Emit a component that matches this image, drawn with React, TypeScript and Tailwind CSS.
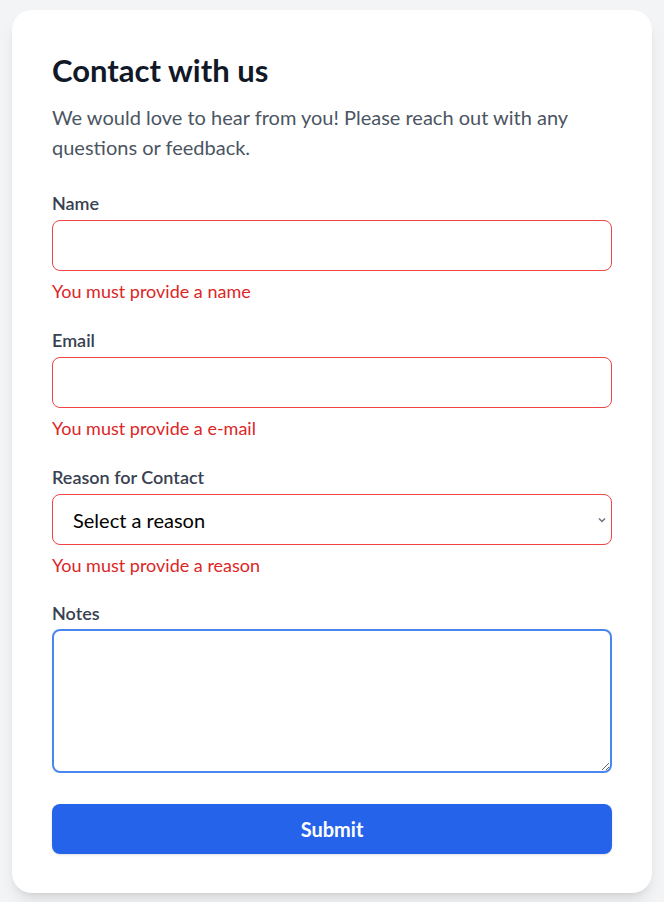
import { useState } from "react";

const fieldClass =
  "block w-full h-[51px] rounded-lg border border-[#ef4444] bg-white px-4 text-[18px] text-black outline-none";

const labelClass = "mb-[5px] block text-[18px] font-semibold leading-6 text-[#374151]";
const errorClass = "mt-2 text-[18px] leading-6 text-[#dc2626]";

export default function App() {
  const [name, setName] = useState("");
  const [email, setEmail] = useState("");
  const [reason, setReason] = useState("");
  const [notes, setNotes] = useState("");

  return (
    <div className="min-h-screen bg-[#f3f4f6] px-3 pt-[10px] pb-[9px] font-['Lato','Liberation_Sans',sans-serif]">
      <div className="rounded-[20px] bg-white px-10 pt-10 pb-[39px] shadow-lg">
        <h1 className="text-[31px] font-bold leading-10 text-[#111827]">Contact with us</h1>
        <p className="mt-3 text-[20px] leading-[30px] text-[#4b5563]">
          We would love to hear from you! Please reach out with any questions or feedback.
        </p>

        <form className="mt-[29px]" onSubmit={(e) => e.preventDefault()}>
          {/* Name */}
          <div className="mb-[25px]">
            <label className={labelClass}>Name</label>
            <input className={fieldClass} value={name} onChange={(e) => setName(e.target.value)} />
            <p className={errorClass}>You must provide a name</p>
          </div>

          {/* Email */}
          <div className="mb-[25px]">
            <label className={labelClass}>Email</label>
            <input type="email" className={fieldClass} value={email} onChange={(e) => setEmail(e.target.value)} />
            <p className={errorClass}>You must provide a e-mail</p>
          </div>

          {/* Reason */}
          <div className="mb-[24px]">
            <label className={labelClass}>Reason for Contact</label>
            <div className="relative">
              <select
                className={fieldClass + " appearance-none pl-5 text-[20px]"}
                value={reason}
                onChange={(e) => setReason(e.target.value)}
              >
                <option value="">Select a reason</option>
                <option value="support">Support</option>
                <option value="sales">Sales</option>
                <option value="other">Other</option>
              </select>
              <svg
                className="pointer-events-none absolute right-[5px] top-1/2 -translate-y-1/2"
                width="10"
                height="10"
                viewBox="0 0 10 10"
                fill="none"
                stroke="#6b7280"
                strokeWidth="1.5"
              >
                <path d="M2 3.5 L5 6.5 L8 3.5" />
              </svg>
            </div>
            <p className={errorClass}>You must provide a reason</p>
          </div>

          {/* Notes */}
          <div>
            <label className="mb-1 block text-[18px] font-semibold leading-6 text-[#374151]">Notes</label>
            <textarea
              className="block h-[144px] w-full rounded-lg border-2 border-[#4a86f0] bg-white px-4 py-2 text-[18px] outline-none"
              value={notes}
              onChange={(e) => setNotes(e.target.value)}
            />
          </div>

          <button
            type="submit"
            className="mt-[31px] block h-[50px] w-full rounded-lg bg-[#2563eb] text-[20px] font-bold text-white shadow-sm"
          >
            Submit
          </button>
        </form>
      </div>
    </div>
  );
}
